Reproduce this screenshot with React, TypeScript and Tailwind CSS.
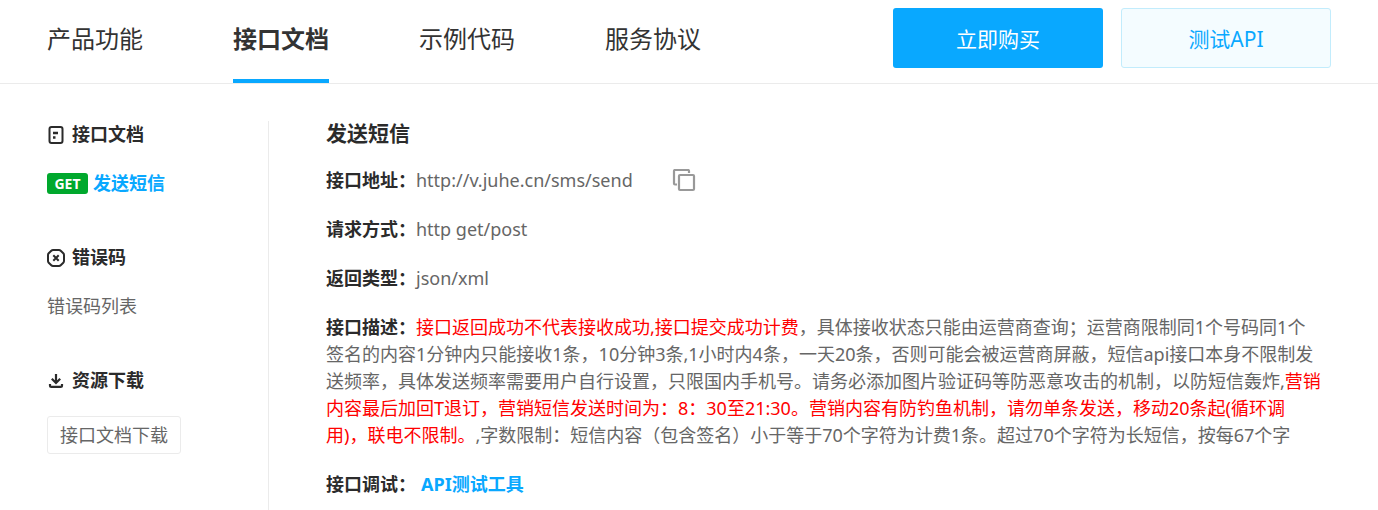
import React from 'react';

const tabs = [
  { label: '产品功能', active: false },
  { label: '接口文档', active: true },
  { label: '示例代码', active: false },
  { label: '服务协议', active: false },
];

function DocIcon() {
  return (
    <svg viewBox="0 0 18 18" className="size-[18px]" fill="none" stroke="#2b2b2b" strokeWidth="2" aria-hidden="true">
      <rect x="2.5" y="1" width="13" height="16" rx="2" />
      <path d="M6 7h5M6 11.500h2.500" strokeWidth="2.400" />
    </svg>
  );
}

function ErrorIcon() {
  return (
    <svg viewBox="0 0 18 18" className="size-[18px]" fill="none" stroke="#2b2b2b" strokeWidth="2" aria-hidden="true">
      <path d="M6 1h6q1 0 1.700.700L16.300 4.300Q17 5 17 6v6q0 1-.7 1.700L13.700 16.300Q13 17 12 17H6q-1 0-1.700-.7L1.700 13.700Q1 13 1 12V6q0-1 .7-1.700L4.300 1.700Q5 1 6 1Z" />
      <path d="m6.300 6.300 5.400 5.400M11.700 6.300l-5.400 5.400" />
    </svg>
  );
}

function DownloadIcon() {
  return (
    <svg viewBox="0 0 18 18" className="size-[18px]" fill="none" stroke="#2b2b2b" strokeWidth="2.200" aria-hidden="true">
      <path d="M9 2v9M4.800 6.800 9 11l4.200-4.200" />
      <path d="M3 12v1.500c0 1 .4 1.400 1.400 1.400h9.200c1 0 1.400-.4 1.400-1.400V12" />
    </svg>
  );
}

function CopyIcon() {
  return (
    <svg viewBox="0 0 24 24" className="size-6" fill="none" stroke="#999" strokeWidth="2.200" aria-hidden="true">
      <rect x="7" y="6" width="15" height="15" rx="1" />
      <path d="M5 15.500H3a1 1 0 0 1-1-1V2a1 1 0 0 1 1-1h13a1 1 0 0 1 1 1v2" />
    </svg>
  );
}

function SideHeading({ icon, children }: { icon: React.ReactNode; children: React.ReactNode }) {
  return (
    <h2 className="flex items-center gap-[7px] font-bold text-[#2b2b2b]">
      {icon}
      {children}
    </h2>
  );
}

function Row({ label, children }: { label: string; children: React.ReactNode }) {
  return (
    <div>
      <dt className="inline font-bold text-[#2b2b2b]">{label}：</dt>
      <dd className="inline">{children}</dd>
    </div>
  );
}

export default function App() {
  return (
    <div className="flex min-h-screen flex-col bg-white font-['Noto_Sans','Noto_Sans_CJK_SC',sans-serif] text-lg/[27px] text-[#666]">
      <header className="flex items-start justify-between border-b border-[#ebebeb] px-[47px]">
        <nav className="flex gap-[90px] text-2xl text-[#333]">
          {tabs.map((tab) => (
            <a
              key={tab.label}
              href="#"
              className={
                tab.active
                  ? 'flex h-[83px] items-center border-b-4 border-[#09a8ff] pb-0.5 font-bold'
                  : 'flex h-[83px] items-center border-b-4 border-transparent pb-0.5'
              }
            >
              {tab.label}
            </a>
          ))}
        </nav>
        <div className="flex gap-[18px] pt-2 text-[21px]">
          <button type="button" className="h-[60px] w-[210px] rounded-[3px] bg-[#09a8ff] pt-0.5 text-white">
            立即购买
          </button>
          <button type="button" className="h-[60px] w-[210px] rounded-[3px] border border-[#c2ecfc] bg-[#f4fcff] pt-0.5 text-[#09a8ff]">
            测试API
          </button>
        </div>
      </header>

      <div className="flex flex-1 pt-[37px] pr-[56px] pl-[47px]">
        <aside className="flex w-[222px] shrink-0 flex-col gap-[47px] border-r border-[#ebebeb]">
          <section className="flex flex-col gap-[22px]">
            <SideHeading icon={<DocIcon />}>接口文档</SideHeading>
            <a href="#" className="flex items-center gap-[5px] font-bold text-[#09a8ff]">
              <span className="flex h-[21px] w-[41px] items-center justify-center rounded-[3px] bg-[#00a82d] text-sm text-white">
                GET
              </span>
              发送短信
            </a>
          </section>
          <section className="flex flex-col gap-[22px]">
            <SideHeading icon={<ErrorIcon />}>错误码</SideHeading>
            <a href="#">错误码列表</a>
          </section>
          <section className="flex flex-col items-start gap-[22px]">
            <SideHeading icon={<DownloadIcon />}>资源下载</SideHeading>
            <button type="button" className="h-[38px] rounded-[3px] border border-[#ebebeb] px-3">
              接口文档下载
            </button>
          </section>
        </aside>

        <main className="min-w-0 flex-1 pl-[57px]">
          <h1 className="text-[21px]/[24px] font-bold text-[#2b2b2b]">发送短信</h1>
          <dl className="mt-[22px] flex flex-col gap-[22px]">
            <div className="flex items-center">
              <dt className="font-bold text-[#2b2b2b]">接口地址：</dt>
              <dd className="flex items-center gap-[39px]">
                http://v.juhe.cn/sms/send
                <button type="button" aria-label="复制">
                  <CopyIcon />
                </button>
              </dd>
            </div>
            <Row label="请求方式">http get/post</Row>
            <Row label="返回类型">json/xml</Row>
            <Row label="接口描述">
              <span className="text-[#f00]">接口返回成功不代表接收成功,接口提交成功计费</span>
              ，具体接收状态只能由运营商查询；运营商限制同1个号码同1个签名的内容1分钟内只能接收1条，10分钟3条,1小时内4条，一天20条，否则可能会被运营商屏蔽，短信api接口本身不限制发送频率，具体发送频率需要用户自行设置，只限国内手机号。请务必添加图片验证码等防恶意攻击的机制，以防短信轰炸,
              <span className="text-[#f00]">
                营销内容最后加回T退订，营销短信发送时间为：8：30至21:30。营销内容有防钓鱼机制，请勿单条发送，移动20条起(循环调用)，联电不限制。
              </span>
              ,字数限制：短信内容（包含签名）小于等于70个字符为计费1条。超过70个字符为长短信，按每67个字
            </Row>
            <Row label="接口调试">
              <a href="#" className="ml-[5px] font-bold text-[#09a8ff]">
                API测试工具
              </a>
            </Row>
          </dl>
        </main>
      </div>
    </div>
  );
}
